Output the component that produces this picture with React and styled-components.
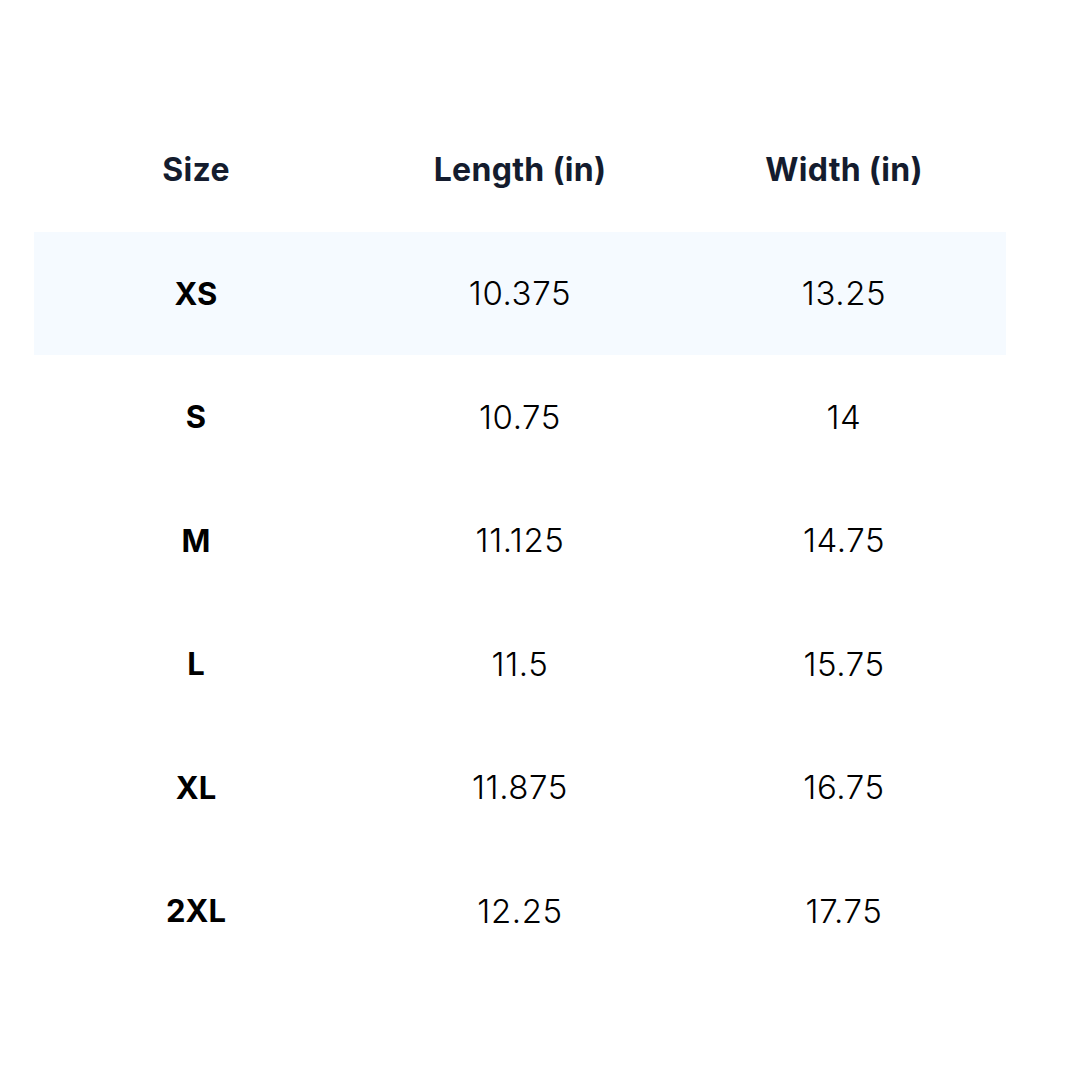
import styled, { createGlobalStyle } from "styled-components";

const GlobalStyle = createGlobalStyle`
  body {
    margin: 0;
    background: #ffffff;
    font-family: Inter, "Open Sans", sans-serif;
  }
`;

const Page = styled.div`
  width: 1080px;
  height: 1080px;
  padding: 108px 0 0 34px;
  box-sizing: border-box;
`;

const Table = styled.div`
  width: 972px;
  display: flex;
  flex-direction: column;
`;

const Row = styled.div`
  display: grid;
  grid-template-columns: repeat(3, 1fr);
  align-items: center;
  height: 123.5px;
  background: ${(p) => (p.$shaded ? "#f5faff" : "transparent")};
`;

const HeadCell = styled.div`
  text-align: center;
  font-size: 32px;
  font-weight: 700;
  color: #141c2e;
  letter-spacing: 0.3px;
`;

const Cell = styled.div`
  text-align: center;
  font-size: ${(p) => (p.$bold ? "31px" : "33px")};
  font-weight: ${(p) => (p.$bold ? 700 : 300)};
  color: #000000;
  letter-spacing: ${(p) => (p.$bold ? "0" : "0.6px")};
`;

const rows = [
  ["XS", "10.375", "13.25"],
  ["S", "10.75", "14"],
  ["M", "11.125", "14.75"],
  ["L", "11.5", "15.75"],
  ["XL", "11.875", "16.75"],
  ["2XL", "12.25", "17.75"],
];

export default function App() {
  return (
    <>
      <GlobalStyle />
      <Page>
        <Table>
          <Row>
            <HeadCell>Size</HeadCell>
            <HeadCell>Length (in)</HeadCell>
            <HeadCell>Width (in)</HeadCell>
          </Row>
          {rows.map((r, i) => (
            <Row key={r[0]} $shaded={i === 0}>
              <Cell $bold>{r[0]}</Cell>
              <Cell>{r[1]}</Cell>
              <Cell>{r[2]}</Cell>
            </Row>
          ))}
        </Table>
      </Page>
    </>
  );
}
